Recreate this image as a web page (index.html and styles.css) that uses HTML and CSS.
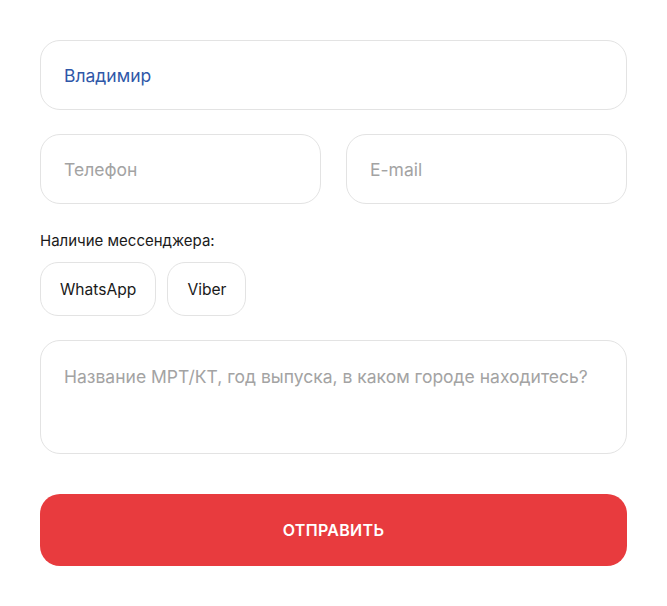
FILE: index.html
```html
<!DOCTYPE html>
<html lang="ru">
<head>
<meta charset="utf-8">
<link rel="stylesheet" href="styles.css">
</head>
<body>
<form class="form">
  <div class="field field-full"><span class="value">Владимир</span></div>
  <div class="row">
    <div class="field"><span class="placeholder">Телефон</span></div>
    <div class="field"><span class="placeholder">E-mail</span></div>
  </div>
  <div class="messenger">
    <div class="label">Наличие мессенджера:</div>
    <div class="chips">
      <span class="chip">WhatsApp</span>
      <span class="chip">Viber</span>
    </div>
  </div>
  <div class="field textarea"><span class="placeholder">Название МРТ/КТ, год выпуска, в каком городе находитесь?</span></div>
  <button type="button" class="submit">ОТПРАВИТЬ</button>
</form>
</body>
</html>
```

FILE: styles.css
```css
* { box-sizing: border-box; }
html, body { margin: 0; background: #fff; }
body {
  font-family: Inter, "Noto Sans", sans-serif;
  padding: 40px 40px 0 40px;
  width: 667px;
}
.form {
  width: 587px;
  display: flex;
  flex-direction: column;
}
.field {
  height: 70px;
  border: 1px solid #e3e3e3;
  border-radius: 20px;
  padding: 1px 23px 0;
  display: flex;
  align-items: center;
  font-size: 17.5px;
}
.value { color: #2f57a8; }
.placeholder { color: #a3a3a3; }
.row {
  margin-top: 24px;
  display: grid;
  grid-template-columns: 1fr 1fr;
  gap: 25px;
}
.messenger { margin-top: 27px; }
.label {
  font-size: 15px;
  color: #1a1a1a;
  line-height: 20px;
}
.chips {
  margin-top: 11px;
  display: flex;
  gap: 11px;
}
.chip {
  height: 54px;
  border: 1px solid #e3e3e3;
  border-radius: 18px;
  padding: 1px 19px 0;
  display: flex;
  align-items: center;
  font-size: 15.6px;
  color: #1a1a1a;
}
.textarea {
  margin-top: 24px;
  height: 114px;
  align-items: flex-start;
  padding-top: 25px;
}
.submit {
  margin-top: 40px;
  height: 72px;
  border: none;
  border-radius: 20px;
  background: #e83b3e;
  color: #fff;
  font-family: Inter, "Noto Sans", sans-serif;
  font-size: 16px;
  font-weight: 600;
  letter-spacing: 0.3px;
}
```
